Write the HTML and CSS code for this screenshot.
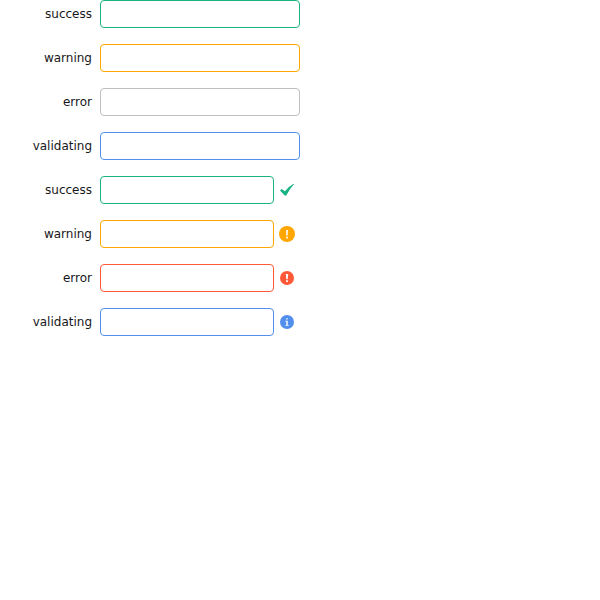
FILE: index.html
```html
<!DOCTYPE html>
<html lang="en">
<head>
<meta charset="utf-8">
<title>Form validation</title>
<link rel="stylesheet" href="styles.css">
</head>
<body>
<form class="form">
<div class="row"><label class="label">success</label><div class="control"><input class="input success"></div></div>
<div class="row"><label class="label">warning</label><div class="control"><input class="input warning"></div></div>
<div class="row"><label class="label">error</label><div class="control"><input class="input"></div></div>
<div class="row"><label class="label">validating</label><div class="control"><input class="input validating"></div></div>
<div class="row"><label class="label">success</label><div class="control"><input class="input success"><span class="status"><svg width="16" height="16" viewBox="0 0 16 16"><path fill="#18b283" d="M1 8.400 2.700 6.900 5.900 9.300Q9.500 4.500 14.600 1.700L15 2.200Q10.500 7 7.200 13.400L5.700 13.600Z"/></svg></span></div></div>
<div class="row"><label class="label">warning</label><div class="control"><input class="input warning"><span class="status"><svg width="16" height="16" viewBox="0 0 16 16"><circle cx="8" cy="8" r="8" fill="#ffa602"/><path fill="#fff" d="M7.100 4h1.800l-.2 5.500H7.300zM7.100 10.700h1.800v1.800H7.100z"/></svg></span></div></div>
<div class="row"><label class="label">error</label><div class="control"><input class="input error"><span class="status"><svg width="16" height="16" viewBox="0 0 16 16"><circle cx="8" cy="8" r="7" fill="#ff5937"/><path fill="#fff" d="M6.800 4h2.400l-.5 5.200H7.300zM7.100 10.200h1.800v1.800H7.100z"/></svg></span></div></div>
<div class="row"><label class="label">validating</label><div class="control"><input class="input validating"><span class="status"><svg width="16" height="16" viewBox="0 0 16 16"><circle cx="8" cy="8" r="7" fill="#528eeb"/><path fill="#fff" d="M7.200 4.300h1.500v1.300H7.200zM6.400 6.700h2.300v4.400h1v.7H6.400v-.7h.9V7.400h-.9z"/></svg></span></div></div>
</form>
</body>
</html>
```
FILE: styles.css
```css
* { box-sizing: border-box; }
body { margin: 0; background: #fff; color: #17181a; font: 12px/28px "DejaVu Sans", sans-serif; }
.form { display: flex; flex-direction: column; gap: 16px; width: 300px; }
.row { display: flex; height: 28px; }
.label { flex: none; width: 100px; padding-right: 8px; text-align: right; }
.control { display: flex; flex: 1; min-width: 0; align-items: center; }
.input { flex: 1; min-width: 0; height: 28px; margin: 0; padding: 0 8px; border: 1px solid #bfbfc3; border-radius: 4px; outline: 0; background: #fff; }
.success { border-color: #18b283; }
.warning { border-color: #ffa602; }
.error { border-color: #ff5937; }
.validating { border-color: #528eeb; }
.status { display: flex; flex: none; justify-content: center; width: 26px; }
.status svg { display: block; }
```
